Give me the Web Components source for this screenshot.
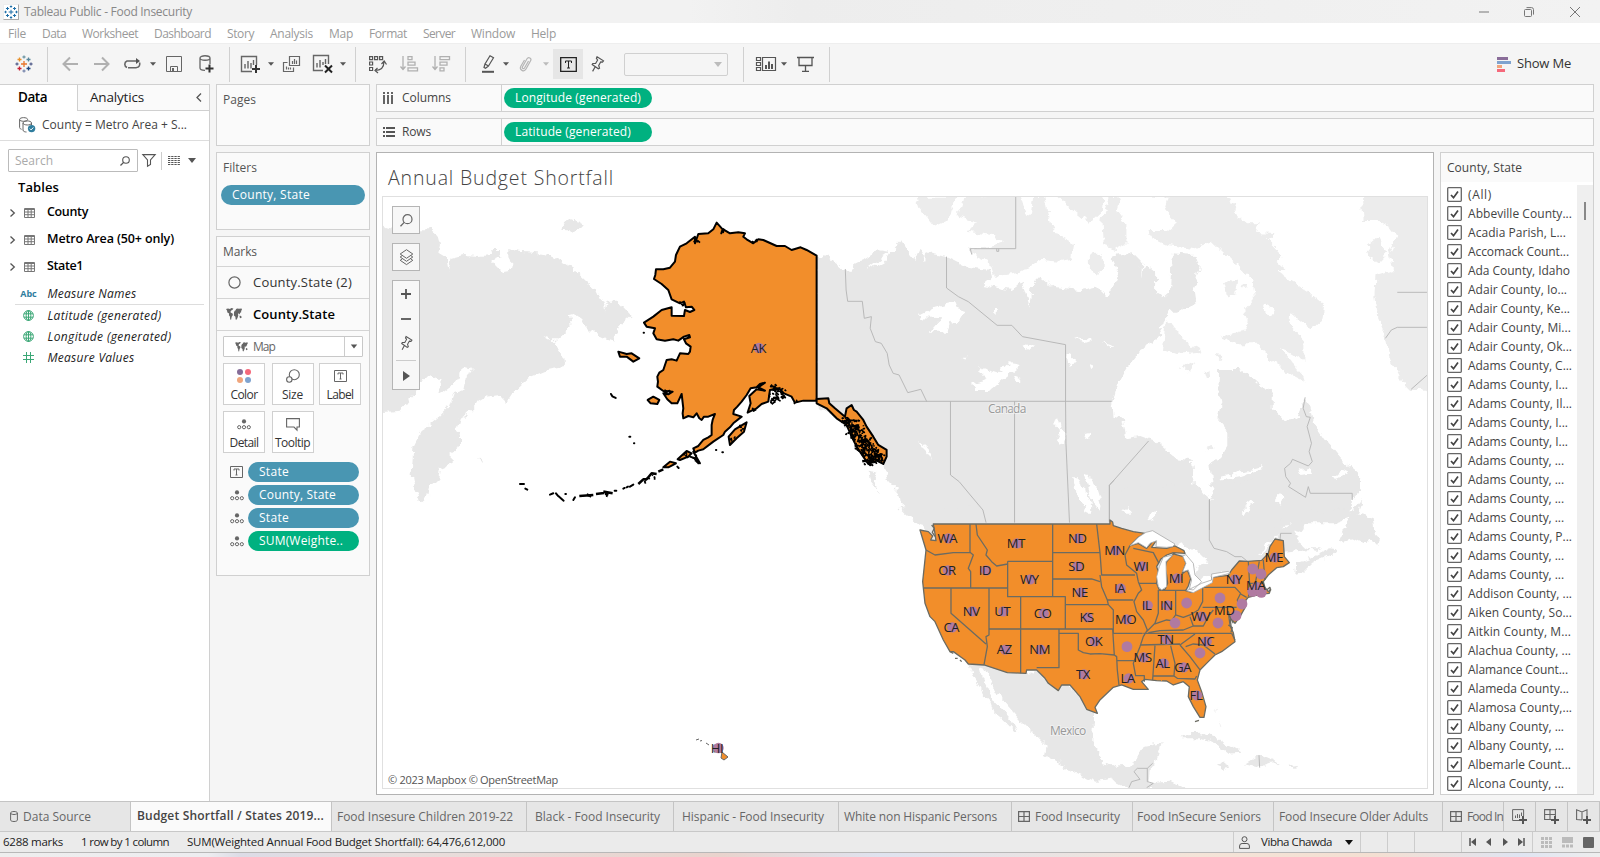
<!DOCTYPE html>
<html lang="en">
<head>
<meta charset="utf-8">
<title>Tableau Public - Food Insecurity</title>
<style>
html,body{margin:0;height:100%;overflow:hidden;background:#f5f5f5;font-family:"Open Sans","Noto Sans",sans-serif;font-size:12px;color:#333}
</style>
</head>
<body>
<tab-app></tab-app>
<script>
const define = (name, css, html) => customElements.define(name, class extends HTMLElement {
  constructor() { super(); this.attachShadow({ mode: 'open' }); }
  connectedCallback() {
    if (this.ready) return;
    this.ready = true;
    const t = document.createElement('template');
    t.innerHTML = `<style>*{box-sizing:border-box}:host{box-sizing:border-box;flex-shrink:0}${css}</style>${typeof html === 'function' ? html(this) : html}`;
    this.shadowRoot.append(t.content.cloneNode(true));
  }
});

/* Text that tracks its letters so that the run takes exactly `w` pixels. */
customElements.define('fit-text', class extends HTMLElement {
  constructor() { super(); this.attachShadow({ mode: 'open' }).innerHTML = '<style>:host{display:inline-block;white-space:pre;line-height:1.3;flex-shrink:0}</style><slot></slot>'; }
  connectedCallback() {
    const w = +this.getAttribute('w');
    if (!w || this.done) return;
    this.done = true;
    const natural = this.getBoundingClientRect().width;
    this.style.letterSpacing = ((w - natural) / this.textContent.length).toFixed(3) + 'px';
    this.style.width = w + 'px';
  }
});
const T = (w, s, style = '') => `<fit-text w="${w}" style="${style}">${s}</fit-text>`;

const plus = (x, y, c = '#333') => `<path d="M${x - 4} ${y}h8M${x} ${y - 4}v8" stroke="${c}" stroke-width="2"/>`;
const cross = (x, y, r, c) => `<path d="M${x - r} ${y}h${2 * r}M${x} ${y - r}v${2 * r}" stroke="${c}" stroke-width="1.3"/>`;
const logo = (c) => cross(9, 9, 3, c[0]) + cross(4.5, 4.5, 2, c[1]) + cross(13.5, 4.5, 2, c[2]) + cross(4.5, 13.5, 2, c[3]) + cross(13.5, 13.5, 2, c[4]) + cross(9, 2, 1.5, c[5]) + cross(2, 9, 1.5, c[6]) + cross(16, 9, 1.5, c[7]) + cross(9, 16, 1.5, c[8]);
const dots3 = '<circle cx="7" cy="2.4" r="2.1" fill="#666"/><g stroke="#666"><circle cx="2.2" cy="8.2" r="1.6"/><circle cx="7" cy="8.2" r="1.6"/><circle cx="11.8" cy="8.2" r="1.6"/></g>';
const world = '<path fill="#666" d="M0 1l2-.6L4 1l1.200-1 2.200.4-1 1.600-1.200.6-.8 1.400.6.800 1.600.8.3 1.400-1.200 1.800-.6 3-.9-.2-.3-3-1-1.400.2-1.600L1.400 4.400 1 2.400zM8 4.200l.7-1.400 1-.6L10 1l1.600-.6L13 .800l2.600-.4.4 1.600-.9.8.1 1.400-1 .6-.5 1.800-.9-1.400-.8.8.3 1.600-.8 2.400-1 1.800-.9-.4-.2-2.600-1.500-1.200zM13.800 7.600l1.600.6.2 1.600-1.400.5-.7-1.300z"/>';
const T_ = (x, y) => `<path d="M${x - 3} ${y - 1.5}v-2h6v2M${x} ${y - 3.5}v7M${x - 1.5} ${y + 3.5}h3" stroke="currentColor"/>`;
const pin = '<path d="M6 .8l6.500 4-1 1.400-1.800-.3-2 3.600.8 2.600-1.200.7L1.200 8.600l.6-1.100 2.800 0 2-3.500-1.200-1.700zM4.200 10.800l-2.600 4.600" stroke="#555" stroke-width="1.200"/>';
const I = {
  app: [14, 14, `<g transform="scale(.78)">${logo(Array(9).fill('#1f6fa8'))}</g>`],
  logo: [18, 18, logo(['#e8762c', '#e8912c', '#59879b', '#c72035', '#1f457e', '#7199a6', '#5b6591', '#5b6591', '#7d8bb0'])],
  back: [16, 14, '<path d="M8 .5L1.500 7 8 13.500M1.500 7H16" stroke="#b0b0b0" stroke-width="2"/>'],
  fwd: [16, 14, '<path d="M8 .5l6.500 6.500L8 13.500M14.500 7H0" stroke="#b0b0b0" stroke-width="2"/>'],
  redo: [18, 12, '<path d="M4 9.500a3.500 3.500 0 010-6.500h10M13.500 9.500a3.500 3.500 0 003-5M5 9.700h8.500" stroke="#666" stroke-width="1.600"/><path d="M13 0l4 3-4 3z" fill="#555"/>'],
  caret: [6, 4, '<path d="M0 .2h6L3 3.800z" fill="#555"/>'],
  caretL: [6, 4, '<path d="M0 .2h6L3 3.800z" fill="#bbb"/>'],
  caretB: [8, 5, '<path d="M0 0h8L4 5z" fill="#555"/>'],
  caretK: [8, 5, '<path d="M0 0h8L4 5z" fill="#111"/>'],
  save: [16, 16, '<path d="M.5.500h15v15H.5zM4.500 15.500v-5h7v5" stroke="#666"/><path d="M6 12h2v3H6z" fill="#666"/>'],
  db: [15, 18, '<path d="M1 3c0-3 10-3 10 0s-10 3-10 0v10c0 2 3 2.300 5 2.300M11 3v6" stroke="#666" stroke-width="1.300"/>' + plus(10.5, 13.5)],
  sheet: [19, 17, '<path d="M11 15.500H.5V.5h15V9M4 12.500V8M7 12.500V5M10 12.500V7M12.500 9V4" stroke="#666" stroke-width="1.400"/>' + plus(15, 13)],
  dup: [17, 16, '<path d="M6.500.5h10v9h-10zM4.500 6.500h-4v9h10v-4M9.500 8V5M11.500 8V3M13.500 8V4.500M3.500 13.500v-3M5.500 13.500v-2M7.500 13.500v-2" stroke="#666" stroke-width="1.200"/>'],
  clear: [19, 18, '<path d="M10 15.500H.5V.5h15V9M4 12.500V8M7 12.500V5M10 10V7M12.500 9V4" stroke="#666" stroke-width="1.400"/><path d="M12 10.500l7 7M19 10.500l-7 7" stroke="#222" stroke-width="2"/>'],
  swap: [18, 17, '<path d="M.6.600h3v3h-3zM5.600.6h3v3h-3zM10.600.6h3v3h-3zM.6 6h3v3h-3zM.6 11.500h3v3h-3zM6 14.500c6 0 9-3 9-9M8.500 12L6 14.500 9 17M12.500 8L15.200 5 17.500 8.500" stroke="#555" stroke-width="1.200"/>'],
  asc: [18, 16, '<path d="M3 0v13M.5 10.500L3 13.500l2.500-3M8 .6h4v3H8zM8 6.200h7v3H8zM8 11.800h9.500v3H8z" stroke="#b0b0b0" stroke-width="1.300"/>'],
  desc: [18, 16, '<path d="M3 0v13M.5 10.500L3 13.500l2.500-3M8 .6h9.500v3H8zM8 6.200h7v3H8zM8 11.800h4v3H8z" stroke="#b0b0b0" stroke-width="1.300"/>'],
  pen: [13, 18, '<path d="M8 .7l3.500 2L6.500 11 3 9zM3 9l-1 3.500 1.500.8 3-2.300" stroke="#555" stroke-width="1.200"/><path d="M0 16.800h12" stroke="#555" stroke-width="2"/>'],
  clip: [13, 16, '<path d="M9.500 5l-4 7c-1 1.500-2.800.3-2-1.200l4.500-8c1.500-2.500 5-.5 3.600 2L7 13c-2 3.500-7 1-5.200-2.700L5.500 4" stroke="#b5b5b5" stroke-width="1.200"/>'],
  tbox: [17, 15, `<g style="color:#222"><path d="M.7.700h15.600v13.600H.7z" stroke="#222" stroke-width="1.300"/>${T_(8.5, 7.5)}</g>`],
  tsm: [13, 12, '<path d="M.5.500h12v11h-12z" stroke="#666"/><path d="M4 4.500v-1.500h5v1.500M6.500 3v6M5.500 9h2" stroke="#666"/>'],
  pin: [13, 16, pin],
  cards: [20, 15, '<path d="M.5.500h4v3h-4zM.5 5.500h4v3h-4zM.5 10.500h4v3h-4zM6.500.5h13v13h-13z" stroke="#555" stroke-width="1.200"/><path d="M10 12V8M13 12V4.500M16 12V7" stroke="#555" stroke-width="2"/>'],
  present: [17, 16, '<path d="M0 1.500h17M2 2v7.500h13V2M8.500 10v5M5 15.400h7" stroke="#555" stroke-width="1.300"/>'],
  showme: [14, 15, '<path d="M0 0h11v3H0z" fill="#8a6d99"/><path d="M0 4h14v3H0z" fill="#7fa3cf"/><path d="M0 8h5v3H0z" fill="#f0a57c"/><path d="M0 12h8v3H0z" fill="#f5697b"/>'],
  chevL: [5, 9, '<path d="M5 .5L1 4.500l4 4" stroke="#555" stroke-width="1.300"/>'],
  chevR: [5, 8, '<path d="M.5.500L4.300 4 .5 7.500" stroke="#555" stroke-width="1.300"/>'],
  ds: [17, 16, '<path d="M.6 2.500c0-2.500 8-2.500 8 0s-8 2.300-8 0v8c0 1 1 1.500 2 1.800M4 6c0-2.800 8.500-2.800 8.500 0s-8.500 2.500-8.500 0v7c0 1.500 2 2 3.500 2M12.500 6v2" stroke="#666"/><circle cx="12.600" cy="11.600" r="3.700" fill="#2f7d9e"/><path d="M10.800 11.600l1.300 1.300 2.200-2.400" stroke="#fff"/>'],
  mag: [10, 10, '<circle cx="6" cy="4" r="3.300" stroke="#555" stroke-width="1.100"/><path d="M3.600 6.400L.5 9.500" stroke="#555" stroke-width="1.300"/>'],
  magB: [13, 13, '<circle cx="7.500" cy="5.200" r="4.500" stroke="#666" stroke-width="1.200"/><path d="M4.200 8.400L.5 12.300" stroke="#666" stroke-width="1.300"/>'],
  funnel: [14, 13, '<path d="M.8.600h12.400L8.500 6v4.500l-3 1.800V6z" stroke="#555" stroke-width="1.100"/>'],
  list: [12, 10, '<path d="M0 .5h12M0 2.500h12M0 4.500h12M0 6.500h12M0 8.500h12" stroke="#555" stroke-dasharray="2.300 .9"/>'],
  table: [11, 10, '<path d="M.5.500h10v9h-10zM.5 1.500h10M.5 4h10M.5 6.700h10M4 2v7.500M7.200 2v7.500" stroke="#777"/>'],
  globe: [11, 11, '<g stroke="#3ba776"><circle cx="5.500" cy="5.500" r="4.900"/><ellipse cx="5.500" cy="5.500" rx="2.300" ry="4.900"/><path d="M1 3.800h9M1 7.200h9M5.500.5v10"/></g>'],
  hash: [11, 11, '<path d="M0 3.500h11M0 7.500h11M3.500 0v11M7.500 0v11" stroke="#3ba776"/>'],
  circle: [13, 13, '<circle cx="6.500" cy="6.500" r="5.600" stroke="#666" stroke-width="1.200"/>'],
  world: [16, 12, world],
  worldS: [13, 10, `<g transform="scale(.8)">${world}</g>`],
  color: [14, 14, '<circle cx="3" cy="3" r="3" fill="#856c98"/><circle cx="11" cy="3" r="3" fill="#f5697b"/><circle cx="3" cy="11" r="3" fill="#f0a57c"/><circle cx="11" cy="11" r="3" fill="#7fa3cf"/>'],
  size: [14, 14, '<circle cx="8.300" cy="5.700" r="5" stroke="#666" stroke-width="1.100"/><circle cx="3.300" cy="10.500" r="2.700" fill="#fafafa" stroke="#666" stroke-width="1.100"/>'],
  detail: [14, 10, dots3],
  tooltip: [14, 13, '<path d="M.6.600h12.800v8.400h-2.400v3.200L8 9H.6z" stroke="#666" stroke-width="1.100"/>'],
  cols: [10, 12, '<path d="M1 0v2M1 3v9M5 0v2M5 3v9M9 0v2M9 3v9" stroke="#555" stroke-width="1.800"/>'],
  rows: [12, 10, '<path d="M0 1h2M3 1h9M0 5h2M3 5h9M0 9h2M3 9h9" stroke="#555" stroke-width="1.800"/>'],
  layers: [15, 17, '<path d="M7.500.7l6.300 4.300-6.300 4.300L1.200 5zM1.200 8l6.300 4.300L13.800 8M1.200 11.300l6.300 4.300 6.300-4.300M1.200 8l2-1.400M13.800 8l-2-1.400M1.200 11.300l2-1.400M13.800 11.300l-2-1.400" stroke="#666"/>'],
  add: [10, 10, '<path d="M0 5h10M5 0v10" stroke="#555" stroke-width="1.800"/>'],
  sub: [10, 10, '<path d="M0 5h10" stroke="#555" stroke-width="1.800"/>'],
  play: [7, 10, '<path d="M0 0l7 5-7 5z" fill="#555"/>'],
  min: [10, 10, '<path d="M0 5h10" stroke="#777"/>'],
  max: [10, 10, '<path d="M.5 3.500q0-1 1-1h5q1 0 1 1v5q0 1-1 1h-5q-1 0-1-1zM2.500.6h5q2 0 2 2v5" stroke="#777"/>'],
  close: [10, 10, '<path d="M0 0l10 10M10 0L0 10" stroke="#777"/>'],
  cyl: [8, 11, '<path d="M.6 2c0-2 6.800-2 6.800 0v7c0 2-6.800 2-6.800 0zc0 2 6.800 2 6.800 0" stroke="#666"/>'],
  grid: [12, 11, '<path d="M.6.600h10.800v9.800H.6zM6 .6v9.800M.6 5.500h10.800" stroke="#666" stroke-width="1.200"/>'],
  nsheet: [15, 15, '<path d="M8 11.500H.6V.6h11V7M3.500 9V6.500M5.500 9V5M7.500 9V5.500M9.500 7V3.500" stroke="#666"/>' + plus(11, 11, '#555')],
  ngrid: [15, 15, '<path d="M7 10.500H.6V.6h10.800V7M6 .6v9.900M.6 5.500h10.800" stroke="#666" stroke-width="1.100"/>' + plus(11, 11, '#555')],
  nstory: [15, 15, '<path d="M6 11L.6 10.500V.8L6 3l5-2.200V7M6 3v8" stroke="#666" stroke-width="1.100"/>' + plus(11, 11, '#555')],
  person: [11, 13, '<circle cx="5.500" cy="3.200" r="2.500" stroke="#555"/><path d="M.6 12.400V10q0-2.500 2.500-2.500h4.800q2.500 0 2.500 2.500v2.400z" stroke="#555"/>'],
  first: [7, 8, '<path d="M1 0v8" stroke="#555" stroke-width="1.500"/><path d="M7 0v8L2 4z" fill="#555"/>'],
  prev: [5, 8, '<path d="M5 0v8L0 4z" fill="#555"/>'],
  next: [5, 8, '<path d="M0 0v8l5-4z" fill="#555"/>'],
  last: [7, 8, '<path d="M6 0v8" stroke="#555" stroke-width="1.500"/><path d="M0 0v8l5-4z" fill="#555"/>'],
  v1: [11, 11, '<path d="M0 1.500h11M0 5.500h11M0 9.500h11" stroke="#bbb" stroke-width="3" stroke-dasharray="3 1"/>'],
  v2: [11, 11, '<path d="M0 0h11v6H0z" fill="#bbb"/><path d="M0 9h11" stroke="#bbb" stroke-width="3" stroke-dasharray="3 1"/>'],
  v3: [11, 11, '<rect width="11" height="11" rx="1" fill="#666"/>'],
  check: [15, 15, '<rect x=".7" y=".7" width="13.600" height="13.600" rx=".8" fill="#fff" stroke="#666" stroke-width="1.300"/><path d="M4 8l2.500 2.700L11 4.500" stroke="#444" stroke-width="1.700"/>']
};
define('ui-icon', ':host{display:block}svg{display:block;overflow:visible}', (el) => {
  const [w, h, body] = I[el.getAttribute('name')];
  return `<svg width="${w}" height="${h}" viewBox="0 0 ${w} ${h}" fill="none">${body}</svg>`;
});
const icon = (n, ml = 0, style = '') => `<ui-icon name="${n}" style="margin-left:${ml}px;${style}"></ui-icon>`;

define('title-bar', ':host{display:flex;height:23px;background:linear-gradient(90deg,#f2f2f2 43%,#ededed 50%,#f2f2f2);align-items:center;color:#888;padding-left:3px}.a{border:1px solid #ddd;border-color:#eee #aaa #aaa #eee;background:#fff}.s{flex:1}',
  `<div class="a">${icon('app')}</div><span style="width:5px"></span>${T(168, 'Tableau Public - Food Insecurity')}<span class="s"></span>${icon('min')}${icon('max', 35)}${icon('close', 36)}<span style="width:20px"></span>`);

define('menu-bar', ':host{display:flex;height:20px;background:#fff;align-items:center;color:#9a9a9a;padding:2px 0 0 8px}fit-text{margin-right:16px}',
  () => [['File', 18], ['Data', 24], ['Worksheet', 56], ['Dashboard', 57], ['Story', 27], ['Analysis', 43], ['Map', 24], ['Format', 38], ['Server', 32], ['Window', 44], ['Help', 25]].map(([s, w]) => T(w, s)).join(''));

/* Each entry gives a tool and the centre line it is spaced to; '|' is a divider. */
const tools = [['logo', 23.5], ['|', 47.5], ['back', 70], ['fwd', 102], ['redo', 132], ['caret', 152.5], ['save', 174], ['db', 206.5], ['|', 229.5], ['sheet', 250.5], ['caret', 270.5], ['dup', 291.5], ['clear', 322.5], ['caret', 342.5], ['|', 355.5], ['swap', 378], ['asc', 409], ['desc', 441], ['|', 465.5], ['pen', 488.5], ['caret', 505.5], ['clip', 525.5], ['caretL', 545.5], ['on', 568], ['pin', 597.5], ['combo', 676], ['|', 743.5], ['cards', 766], ['caret', 783.5], ['present', 805.5], ['|', 829.5]];
const toolRow = () => {
  let end = 0;
  return tools.map(([n, c]) => {
    const w = { '|': 1, on: 30, combo: 104 }[n] || I[n][0];
    const ml = c - w / 2 - end;
    end = c + w / 2;
    if (n === '|') return `<i style="margin-left:${ml}px"></i>`;
    if (n === 'on') return `<span class="on" style="margin-left:${ml}px">${icon('tbox')}</span>`;
    if (n === 'combo') return `<span class="combo" style="margin-left:${ml}px">${icon('caretB', 0, 'opacity:.35')}</span>`;
    return icon(n, ml);
  }).join('');
};
define('tool-bar', `:host{display:flex;height:41px;background:#f5f5f5;border-top:1px solid #eee;align-items:center}
span{display:flex;justify-content:center;flex-shrink:0}i{width:1px;height:35px;background:#d0d0d0;margin-top:1px;flex-shrink:0}
.on{background:#e6e6e6;width:30px;height:30px;align-items:center}.combo{width:104px;height:23px;border:1px solid #d0d0d0;border-radius:2px;align-items:center;justify-content:flex-end;padding-right:5px}.s{flex:1}`,
  () => toolRow() + `<span class="s"></span>${icon('showme')}<span style="width:6px"></span>${T(54, 'Show Me', 'font-size:13px;margin-top:-2px')}<span style="width:29px"></span>`);

define('data-field', ':host{display:flex;align-items:center;height:21px;color:#222;font-size:12px}.i{width:18px;display:flex;justify-content:center;margin:0 10px 0 0}b{color:#2f7d9e;font-size:9px;font-weight:700;font-style:normal}',
  (el) => `<span class="i">${el.getAttribute('icon') === 'abc' ? '<b>Abc</b>' : icon(el.getAttribute('icon'))}</span><slot></slot>`);
const field = (ic, w, s) => `<data-field icon="${ic}" style="font-style:italic;padding-left:19.500px">${T(w, s)}</data-field>`;
const trow = (w, s) => `<div class="tr">${icon('chevR')}${icon('table', 9)}${T(w, s, 'margin-left:12px')}</div>`;
define('data-pane', `:host{display:block;width:210px;background:#fff;border-right:1px solid #d0d0d0;border-top:1px solid #d0d0d0}
.tabs{display:flex;height:26px;font-size:13.500px;color:#222}.tabs b{width:77px;padding:3px 0 0 18px}.tabs div{flex:1;display:flex;align-items:center;background:#fafafa;border-left:1px solid #d0d0d0;border-bottom:1px solid #d0d0d0;padding:0 8px 0 12px;justify-content:space-between}
.ds{height:30px;display:flex;align-items:center;padding-left:19px;border-bottom:1px solid #ddd;color:#444;padding-bottom:1px}
.se{display:flex;align-items:center;padding:8px 0 0 8px;height:31px}.in{width:130px;height:23px;border:1px solid #bbb;border-radius:1px;display:flex;align-items:center;justify-content:space-between;padding:0 7px 0 6px;color:#aaa}
.tb{display:block;padding:7px 0 0 18px;height:27px}.tr{display:flex;align-items:center;height:27px;padding-left:10px}.bold{font-weight:600;color:#000;font-size:12.500px}
hr{border:0;border-top:1px solid #ddd;margin:0 5px 0 15px}`,
  `<div class="tabs"><b style="font-weight:600;color:#000">${T(29, 'Data')}</b><div>${T(54, 'Analytics')}${icon('chevL')}</div></div>
<div class="ds">${icon('ds')}${T(145, 'County = Metro Area + S...', 'margin-left:6px')}</div>
<div class="se"><div class="in">${T(38, 'Search')}${icon('mag')}</div>${icon('funnel', 4)}<span style="width:1px;height:18px;background:#ccc;margin-left:5px"></span>${icon('list', 6)}${icon('caretB', 8)}</div>
<div class="bold"><div class="tb">${T(41, 'Tables', 'font-size:13px')}</div>${trow(41, 'County')}${trow(127, 'Metro Area (50+ only)')}${trow(36, 'State1')}</div>
<div style="height:3px"></div>${field('abc', 89, 'Measure Names')}<hr>${field('globe', 114, 'Latitude (generated)')}${field('globe', 124, 'Longitude (generated)')}${field('hash', 87, 'Measure Values')}`);

define('shelf-pill', ':host{display:flex;align-items:center;height:20px;border-radius:10px;padding-left:11px;color:#fff;background:#4996b2;font-size:12px}:host([green]){background:#00b180}', '<slot></slot>');
define('side-card', ':host{display:block;background:#fafafa;border:1px solid #d0d0d0;color:#555}.t{height:29px;padding:6px 0 0 6px;font-size:12px}',
  (el) => `<div class="t">${T(el.getAttribute('tw'), el.getAttribute('label'))}</div><slot></slot>`);
define('mark-button', ':host{display:flex;flex-direction:column;align-items:center;justify-content:space-between;height:42px;width:42px;background:#fff;border:1px solid #d0d0d0;padding:0 0 1px}.i{height:24px;display:flex;align-items:center;margin-top:1px}',
  (el) => `<div class="i">${icon(el.getAttribute('icon'))}</div><slot></slot>`);
const mp = (ic, w, s, g = '') => `<div class="mp"><span>${icon(ic)}</span><shelf-pill ${g}>${T(w, s)}</shelf-pill></div>`;
define('shelf-column', `:host{display:flex;flex-direction:column;gap:6px;width:154px}
.l{display:flex;align-items:center;height:32px;border-top:1px solid #d4d4d4;font-size:13px;color:#333;padding-bottom:1px}.l span{width:36px;padding-left:11px}
.sel{display:flex;align-items:center;margin:5px 6px 6px;height:21px;background:#fff;border:1px solid #c8c8c8;border-radius:1px;color:#666}.sel .d{border-left:1px solid #ccc;height:100%;width:18px;display:flex;align-items:center;justify-content:center;margin-left:auto}
.g{display:grid;grid-template-columns:42.500px 41.500px 43px;gap:6px;margin-left:6px;color:#333}
.mp{display:flex;margin-bottom:3px;align-items:center;padding-left:6px}.mp span{width:25px;padding-left:7px}.mp shelf-pill{width:111px}`,
  `<side-card label="Pages" tw="33" style="height:62px"></side-card>
<side-card label="Filters" tw="34" style="height:78px"><shelf-pill style="margin:3px 4px 0">${T(78, 'County, State')}</shelf-pill></side-card>
<side-card label="Marks" tw="34" style="height:340px"><div class="l"><span>${icon('circle')}</span>${T(99, 'County.State (2)')}</div><div class="l" style="font-weight:600;color:#000"><span style="padding-left:9px">${icon('world')}</span>${T(82, 'County.State')}</div><div style="border-top:1px solid #d4d4d4"></div>
<div class="sel">${icon('worldS', 11)}${T(22, 'Map', 'margin-left:5px')}<div class="d">${icon('caretB', 0, 'transform:scale(.8)')}</div></div>
<div class="g"><mark-button icon="color">${T(27, 'Color')}</mark-button><mark-button icon="size">${T(21, 'Size')}</mark-button><mark-button icon="tsm">${T(27, 'Label')}</mark-button><mark-button icon="detail">${T(29, 'Detail')}</mark-button><mark-button icon="tooltip">${T(35, 'Tooltip')}</mark-button></div>
<div style="height:9px"></div>${mp('tsm', 30, 'State')}${mp('detail', 77, 'County, State')}${mp('detail', 30, 'State')}${mp('detail', 84, 'SUM(Weighte..', 'green')}</side-card>`);

define('axis-shelf', ':host{display:flex;height:28px;align-items:center;border:1px solid #d0d0d0;background:#fafafa;color:#444}.h{width:125px;height:100%;border-right:1px solid #d0d0d0;display:flex;align-items:center}.h span{width:25px;padding-left:6px}::slotted(shelf-pill){width:148px;margin-left:2px;flex-shrink:0}',
  (el) => `<div class="h"><span>${icon(el.getAttribute('icon'))}</span>${T(el.getAttribute('lw'), el.getAttribute('label'))}</div><slot></slot>`);

/* ---------- map ---------- */
const labels = [['WA',142,115],['OR',141,211],['ID',255,211],['MT',348,130],['WY',388,238],['NV',214,334],['UT',307,334],['CA',154,382],['CO',428,340],['AZ',313,449],['NM',419,449],['ND',532,115],['SD',529,199],['NE',539,277],['KS',560,352],['OK',581,424],['TX',549,523],['MN',644,151],['IA',659,265],['MO',677,358],['WI',723,199],['IL',740,316],['IN',799,316],['MI',828,235],['TN',797,418],['MS',728,472],['AL',788,490],['GA',848,502],['LA',683,535],['FL',888,586],['NC',917,424],['WV',902,350],['MD',973,331],['NY',1002,238],['MA',1067,256],['ME',1122,172]];
const noDot = ['MD','MA'];
const plain = [[860,309],[825,369],[960,294],[954,369],[681,440],[900,459],[1058,207],[1083,222],[1026,312],[1008,347],[1058,274],[1084,277],[1070,262]];
let seed = 7;
const rnd = () => (seed = (seed * 16807) % 2147483647) / 2147483647;
const scatter = (pts, spread, n) => { let d = ''; pts.forEach(([x, y]) => { for (let i = 0; i < n; i++) d += `M${(x + (rnd() - .5) * spread).toFixed(0)} ${(y + (rnd() - .5) * spread).toFixed(0)}l${(rnd() * 9 - 3).toFixed(0)} ${(rnd() * 8 - 4).toFixed(0)}l${(rnd() * 8 - 3).toFixed(0)} ${(rnd() * 10 - 3).toFixed(0)}`; }); return d; };
const Z4 = 'translate(380 190) scale(.3333)', Z5 = 'translate(900 500) scale(.3333)', Z10 = 'translate(820 190) scale(.3954 .3333)', Z11 = 'translate(1080 480) scale(.3333)', Z12 = 'translate(930 640) scale(.3333)';

define('geo-map', ':host{display:block;position:relative;border:1px solid #e0e0e0;overflow:hidden}svg{display:block;position:absolute;inset:0}path{vector-effect:non-scaling-stroke}.st path{stroke-linejoin:round}',
  () => `<svg width="1044" height="591" viewBox="383 197 1044 591" fill="none">
<defs><filter id="coast" x="0" y="0" width="100%" height="100%"><feTurbulence type="fractalNoise" baseFrequency=".12" numOctaves="3" seed="4" result="n"/><feDisplacementMap in="SourceGraphic" in2="n" scale="9" xChannelSelector="R" yChannelSelector="G"/></filter>
<filter id="edge" x="-2%" y="-2%" width="104%" height="104%"><feTurbulence type="fractalNoise" baseFrequency=".25" numOctaves="2" seed="2" result="n"/><feDisplacementMap in="SourceGraphic" in2="n" scale="4" xChannelSelector="R" yChannelSelector="G"/></filter></defs>
<g filter="url(#coast)"><rect x="383" y="197" width="1044" height="591" fill="#fff"/>
<g fill="#e7e7e7">
<g transform="${Z4}"><path d="M-5 97L20 115 40 120 120 118 150 118 172 135 180 165 175 185 200 200 205 245 212 205 250 195 300 198 325 195 335 180 355 180 362 200 330 212 345 230 370 243 388 240 392 225 385 200 385 175 420 182 490 188 530 205 580 235 650 300 670 345 672 368 680 335 715 335 755 378 735 395 715 410 712 430 700 455 670 445 640 430 610 400 590 370 570 375 575 410 555 430 525 455 510 440 490 435 515 450 530 470 550 500 552 530 500 540 450 560 400 605 380 635 360 615 320 620 295 635 290 645 270 665 240 685 230 720 240 735 240 770 215 785 215 820 180 835 175 870 150 890 145 915 118 938 105 900 95 850 100 770 125 720 150 705 180 680 205 655 220 610 250 600 258 560 275 535 245 530 240 555 215 590 190 610 170 600 185 570 160 560 120 570 110 600 80 640 60 665-5 670ZM540 120L545 105 575 88 600 92 608 108 580 122 555 120ZM250 682l15-10 3 3-12 8zM295 808l4-2 8 14z"/></g>
<g transform="${Z10}">
<path fill="#e7e7e7" d="M-10 197L20 200 55 235 80 240 85 215 110 210 150 180 175 185 115 240 160 215 205 150 220 180 240 210 250 180 265 210 270 190 320 200 370 230 430 240 435 260 410 285 480 300 510 275 530 350 535 290 560 260 590 290 660 300 700 290 725 320 740 290 755 250 740 210 750 190 790 190 815 220 812 265 820 220 850 250 850 310 870 325 885 310 890 190 950 195 960 230 945 300 950 340 900 365 885 365 860 415 820 390 865 418 840 460 810 480 800 500 770 545 750 590 738 650 740 680 765 685 775 745 810 738 850 755 900 805 940 810 945 850 940 885 970 915 985 935 1000 915 990 880 985 825 1010 810 1030 770 1030 720 1005 685 1015 640 1010 600 1012 540 1060 540 1090 560 1120 590 1145 610 1145 660 1170 690 1210 685 1222 625 1240 650 1250 700 1275 745 1320 810 1360 850 1368 900 1345 935 1345 980 1300 1000 1180 1000 1140 1060 285 1060 250 990 205 945 200 910 170 870 160 825 120 800 60 700-10 645Z"/>
<path fill="#ececec" d="M245 20L320 20 345 20 330 60 325 90 290 110 250 50ZM365 20L350 80 395 95 370 125 440 135 465 155 440 165 380 178 385 195 430 220 440 260 500 250 560 210 610 215 635 210 640 160 605 140 585 110 570 20 540 15 532 80 520 75 505 15ZM600 15L720 15 715 60 680 98 650 70ZM735 15L760 20 750 60 775 100 775 165 750 180 715 165 712 90ZM680 200L700 190 720 210 720 240 700 255 680 240ZM820 15L880 20 870 60 900 100 880 120 830 120 835 140 880 165 950 175 990 155 1020 190 1060 230 1095 270 1100 330 1070 370 1080 400 1060 430 1010 440 1050 460 1100 460 1140 510 1200 560 1225 575 1220 555 1160 470 1180 480 1225 510 1225 450 1180 390 1190 370 1240 420 1270 390 1275 345 1230 300 1190 270 1155 240 1180 240 1160 220 1170 200 1130 150 1150 130 1100 125 1110 100 1080 100 1050 70 1055 40 1020 15ZM1022 280l15-14 18 10-5 35-20 5zM1065 285l20-3-5 12zM870 410L882 385 895 420 930 450 948 490 900 495 865 480ZM930 475l20-5 20 15-10 8-30-10zM915 530l20-15 12 10-20 22zM973 545l12 0 2 20-8 5zM1000 495l22 3-8 12zM975 770l15-5 8 8-15 8z"/>
<path fill="#ececec" d="M1370 15L1560 15 1560 610 1520 600 1495 600 1470 570 1440 500 1430 440 1410 390 1402 320 1405 255 1450 240 1440 190 1460 140 1440 110 1410 90 1375 90ZM1385 165l25-25 12 30 15 20-20 25-25-10z"/>
<path d="M120 845L145 850 135 870 152 908 125 870ZM200 950L225 955 270 990 280 1015 250 1005Z"/></g>
<g transform="${Z11}"><path d="M-480 100L200 20 600 0 843 0 843 30 800 80 750 98 680 92 620 100 600 120 560 185 540 230 590 175 600 150 640 125 680 128 665 150 640 160 660 190 690 210 600 220 560 250 500 290 430 350 350 440 300 560 0 620-400 420ZM645 282L650 250 690 235 750 205 770 208 750 225 700 245 670 275ZM680 205l50 0-20 8zM775 185L790 150 820 90 845 60 830 100 875 110 880 150 900 170 895 195 870 180 860 195 820 175ZM495 850L530 828 545 825 600 848 570 852 540 862ZM410 855l20-5 20 8-20 6ZM628 854l22-2 4 6-20 3z"/><path fill="#f1f1f1" d="M407 685l8 8-2 3zM415 715l5 25 4 0z"/></g>
<g transform="${Z12}"><path d="M110 62L160 72 270 90 390 120 490 200 487 300 520 370 560 380 610 375 640 320 695 310 690 330 675 375 660 385 655 430 720 425 770 450 600 450 540 420 500 425 440 400 345 345 350 320 320 290 270 240 205 165 165 90 150 85 155 110 180 160 200 190 245 240 262 272 255 275 215 235 190 215 180 185 165 170 150 140 130 110ZM748 295L770 280 810 278 850 290 900 315 937 335 890 338 860 315 810 295 770 295Z"/></g>
</g>
<g fill="#fff" transform="${Z10}"><path d="M250 375L290 350 340 335 345 350 370 360 350 400 330 395 320 425 280 425 310 385 255 382ZM390 600L385 580 420 570 400 530 450 550 480 520 508 525 470 560 430 600ZM640 865L655 865 660 890 680 910 687 965 675 965 650 920ZM670 855L690 860 712 945 708 965 690 940ZM625 500l12-10 5 20-12 18zM680 515l15 12-8 15zM590 700l15-12 5 25 12 20-10 35-15-20 10-25zM665 750l5-20 15-5-5 20zM435 360l12 0 0 15zM355 500l15 0-2 12zM645 445l45 5-20 8zM715 460l30 10-10 5zM1015 860l45-12 50-15 10-10-5 15-50 20-45 10zM1210 840l25-10 10 20-30 5zM1295 860l35-20 10 5-30 18zM830 980l15-18 0 25zM1075 940l18-10-12 28zM1115 335l35 25-5 15-15-5zM945 875l20 5-5 8zM250 750l25 25 5 35zM490 560l20 10-8 10zM515 465l30 5-25 10zM880 365l40 30-35 8z"/></g>
<g fill="#fff" transform="${Z11}"><path d="M335-10L380 0 400 25 395 60 370 40ZM490 95l25-35 5 8-22 35zM585 60l10-15 12 5-3 20-15 3zM130 95l15-15 5 15zM205 105l12-12 5 25-12 3zM270 200L300 190 370 225 385 245 350 260 340 290 325 270 320 220ZM325 325L400 285 440 278 450 290 400 300 360 335Z"/></g></g>
<g stroke="#b3b3b3" stroke-width=".9"><g transform="${Z10}"><path d="M64 237L66 300 70 334 107 334 112 385 130 380 127 415 140 455 155 460 170 490 175 525 185 550 200 555 222 608 255 598 270 635M320 200V294L350 320 375 335 448 406 485 406 512 440 621 464V630L622 760 631 998M-6 634H738M495 20V176H380L384 194M447 176v8h5v-8M330 634V855L352 875 380 915 412 960 420 998M492 634V998M831 753L732 886V998M1227 622L1222 655 1230 680 1240 682 1232 710 1243 760 1237 785 1245 815 1235 828 1195 808 1190 820 1175 835 1178 860 1190 880 1185 890 1228 922 1235 890 1240 910H1346V930M985 928V1020M1460 307H1535M1430 445L1445 420 1460 412H1535M1495 598L1535 556"/></g><g transform="${Z11}"><path d="M88 125V15L103 0M388 58V180L402 205 440 215 465 230 485 230 500 242M600 180L602 160 635 160M537 825l2 38"/></g><g transform="${Z12}"><path d="M597 443L605 425 630 418 612 395 622 385 652 385 668 370M652 385V425L670 430 650 443"/></g></g>

<g class="st"><g transform="${Z5}" stroke="#6b6b62" stroke-width="1.300">
<g filter="url(#edge)"><path fill="#f28e2b" d="M100 72L630 72 630 60 638 66 640 77 665 85 700 95 735 100 715 112 690 137 715 130 740 145 762 120 768 123 755 142 800 145 825 138 852 152 855 160 820 158 800 165 782 178 770 200 775 215 770 250 778 270 795 268 803 250 800 225 795 205 800 185 820 162 850 170 858 190 846 222 862 210 872 235 865 258 857 272 875 277 905 262 937 245 935 232 985 226 995 210 1018 183 1045 184 1085 181 1105 160 1110 140 1125 117 1150 122 1153 170 1168 188 1150 200 1130 203 1105 225 1090 245 1095 262 1105 275 1112 268 1108 280 1085 282 1045 292 1038 300 1037 320 1020 350 1005 370 990 350 985 335 990 375 1000 398 1005 425 985 440 965 455 945 465 925 485 900 510 892 540 905 575 918 620 912 652 900 652 880 620 865 590 868 560 850 545 820 555 800 543 770 542 735 538 725 545 745 568 700 568 665 555 640 562 600 600 585 622 592 640 560 628 540 590 510 555 485 555 475 572 445 550 435 535 410 510 380 510 378 520 322 518 252 495 205 492 195 480 160 455 150 455 130 420 105 365 90 350 75 310 68 245 78 150 60 90 85 95 98 108 92 120 108 122 104 95Z"/></g>
<path d="M78 150L105 165 160 158 210 157M210 72V157L220 165 205 205 212 215V262M228 72L232 105 262 150 258 165 275 185 290 198 323 192M323 184H458M458 72V290M323 184V290H496V387M72 264H323M153 265V340L258 432M267 265V405L258 410 262 440 252 495M362 290V520M267 387H638M458 158H600M458 237H575L600 245M496 314H625M590 72L600 158 605 225H705M690 137L675 165 680 195 710 220 715 245M622 300H700M600 225L605 260 622 300 625 314 640 330 640 400H728M715 250H770M715 245L725 270 715 280 702 305 710 335 730 360 742 390 730 410 720 440 708 470 700 490 707 527H733V545M775 270V340L765 370 740 395M827 272V345L815 362 800 360 765 372M908 262V305L895 330 870 345 850 352 827 345M730 400H995M722 435L840 432M650 482H705M638 387L643 465 650 470 652 510 657 555M477 400H535V450L550 458 570 462 600 461 643 465M477 387V503H410M765 437L758 540M812 437L825 490 822 528 832 535 885 537 890 528M758 528H822M840 435L870 470 900 510M840 435L885 402M857 440L880 432 910 435 945 462M870 350L880 378M745 398L780 392 850 390 880 378 910 378 925 350 940 330M910 262H1005L1022 280 1012 300 1018 318M908 322H1010M1045 184L1050 270 1045 290M1078 184L1066 250M1048 250H1090M1048 272H1085M1090 180L1095 240M700 145L760 158 777 190M778 271H858M1022 282L1040 292"/>
<path d="M150 455l10 5M165 475h8M180 480l5 5M885 665l12-4M1100 270l10-8 2 10M985 340l15 30M990 350l4 35M995 400l10 20M95 75l8 10-6 12 8 12M985 375l12 8-4 14"/>
<path fill="#fff" stroke="#aaa" stroke-width=".8" d="M690 137L715 112 738 97 758 92 825 132 818 140 800 142 768 140 770 122 750 130 740 143 715 128ZM858 164L880 190 885 225 905 245 880 270 868 268 875 240 865 210 848 215 858 190 848 168ZM860 272L905 250 935 240 935 222 985 214 990 220 940 232 937 248 905 265 880 278ZM790 172L818 165 798 185 800 260 785 270 775 260 770 230 778 200Z"/></g></g>
<g class="st"><g transform="${Z4}" stroke="#000" stroke-width="2">
<path fill="#f28e2b" d="M1310 197L1280 180 1262 172 1235 180 1215 168 1190 168 1150 150 1135 148 1120 160 1100 148 1090 140 1095 130 1075 127 1050 130 1030 118 1024 130 1028 118 1010 98 1000 118 985 130 955 132 945 160 945 140 920 160 900 170 888 195 885 215 870 233 850 238 828 238 826 255 822 267 845 282 865 300 875 328 900 340 912 335 918 352 935 350 943 360 930 366 915 360 912 378 875 377 875 352 845 360 820 380 792 398 800 410 825 415 820 430 830 448 855 452 880 448 895 452 912 440 928 435 930 442 912 448 918 460 932 470 930 485 925 492 900 490 890 512 875 508 860 510 850 540 838 548 832 560 834 575 832 590 850 603 878 605 865 613 850 610 862 628 875 640 892 640 905 612 910 655 908 670 910 685 925 678 940 682 950 670 958 685 965 690 972 680 985 680 1005 672 998 690 995 705 995 735 985 742 970 750 955 768 940 775 945 788 955 782 970 778 1000 755 1030 735 1035 725 1050 712 1060 700 1085 680 1060 672 1062 660 1072 650 1085 635 1100 615 1112 595 1130 592 1140 582 1155 578 1135 592 1155 602 1130 598 1108 618 1112 640 1103 668 1115 662 1130 655 1145 642 1165 635 1170 600 1195 595 1212 610 1235 620 1245 638 1270 632 1310 632Z"/>
<path fill="#f28e2b" d="M1310 627L1345 625 1348 640 1365 655 1395 680 1400 655 1415 645 1422 660 1430 665 1450 690 1460 710 1480 740 1495 765 1520 780 1520 800 1510 822 1490 812 1465 822 1450 800 1430 770 1415 740 1400 705 1370 685 1340 655 1310 640Z"/>
<path fill="#f28e2b" d="M715 485L740 492 755 490 778 505 760 515 740 500 720 500ZM803 630L820 620 838 630 832 642 812 640ZM1046 740L1065 718 1100 697 1092 725 1070 745 1050 765ZM893 808L920 783 935 790 925 800 900 810ZM850 832L870 815 888 820 865 832Z"/>
<path stroke-linecap="round" d="M693 612l4 7 10 5M748 740h3M762 760h1M791 428h1M1008 780h1M1027 787h2M420 882l12 0M436 896l6 3M510 914l10-4M528 910l6 8M535 918l16 14M556 912h2M580 930l5-8M730 896l4-2M740 892l4-2M750 890l10-6M704 902h5M940 785L960 820M930 800l15 5 10 15M892 830l4 4"/>
<path d="M598 918L640 915M648 912L672 909M670 905L698 910" stroke-width="2.600"/>
<path d="M775 882L790 868 800 868 815 850 830 852M835 845L850 838" stroke-width="2.500"/>
<path stroke-width="1.700" d="${scatter([[1180, 605], [1195, 600], [1185, 620], [1180, 630], [1205, 612], [1175, 595]], 22, 10)}${scatter([[1405, 700], [1415, 715], [1412, 735], [1425, 705], [1422, 725], [1440, 720], [1430, 745], [1448, 745], [1435, 765], [1445, 775], [1460, 755], [1455, 785], [1472, 772], [1465, 800], [1460, 812], [1482, 785], [1490, 800], [1475, 812], [1500, 805], [1395, 690]], 24, 15)}${scatter([[905, 345], [860, 608], [1085, 715], [1060, 745], [915, 795], [945, 805]], 14, 5)}${scatter([[800, 868], [820, 855], [620, 916], [680, 908], [945, 155], [1028, 122], [1125, 155], [1250, 635], [1120, 660]], 11, 3)}"/>
</g></g>
<g stroke="#666" fill="#f28e2b"><path d="M696 740l3-1M702 740.500l-2 .5M706 743l3 2M714 745l8 2v5l-8 0zM722 752l6 5-4 3-3-2z"/></g>
<g fill="#b07aa1">${labels.filter(l => !noDot.includes(l[0])).map(([, x, y]) => `<circle cx="${900 + (x + 3) / 3}" cy="${500 + y / 3}" r="5.200"/>`).join('')}${plain.map(([x, y]) => `<circle cx="${900 + x / 3}" cy="${500 + y / 3}" r="5.400"/>`).join('')}<circle cx="759" cy="348" r="5.200"/><circle cx="718.500" cy="748" r="5.200"/></g>
<g font-family="Open Sans,Noto Sans,sans-serif" font-size="13" fill="#222" text-anchor="middle" letter-spacing="-.3">${labels.map(([s, x, y]) => `<text x="${900 + x / 3}" y="${504.7 + y / 3}">${s}</text>`).join('')}<text x="758.500" y="353">AK</text><text x="717" y="753">HI</text><g fill="#999" font-size="12" stroke="#f0f0f0" stroke-width="2" paint-order="stroke"><text x="1007" y="413" textLength="38">Canada</text><text x="1068" y="734.500" textLength="36">Mexico</text></g></g>
</svg>
<style>.c{position:absolute;left:9px;width:28px;background:#f7f7f7;border:1px solid #b5b5b5;display:flex;flex-direction:column;align-items:center}.at{position:absolute;left:2px;bottom:2px;padding:0 3px;background:#ffffffb0;color:#555;height:15px}</style>
<div class="c" style="top:9px;height:28px;justify-content:center">${icon('magB')}</div><div class="c" style="top:46px;height:28px;justify-content:center">${icon('layers')}</div>
<div class="c" style="top:83px;height:110px;padding-top:8px">${icon('add')}${icon('sub', 0, 'margin-top:15px')}${icon('pin', 0, 'margin-top:11px;transform:scale(.9)')}<span style="width:20px;height:1px;background:#ccc;margin:9px 0 10px"></span>${icon('play')}</div>
<div class="at">${T(170, '© 2023 Mapbox © OpenStreetMap', 'font-size:11px')}</div>`);

define('work-sheet', ':host{display:flex;flex-direction:column;background:#fff;border:1px solid #b3b3b3;padding:0 5px 5px;width:1058px}.h{height:43px;padding:11px 0 0 6px;color:#444;font-size:19.500px;font-weight:300}geo-map{flex:1}',
  `<div class="h">${T(226, 'Annual Budget Shortfall')}</div><geo-map></geo-map>`);

const counties = [['(All)',24],['Abbeville County...',104],['Acadia Parish, L...',98],['Accomack Count...',101],['Ada County, Idaho',102],['Adair County, Io...',99],['Adair County, Ke...',102],['Adair County, Mi...',103],['Adair County, Ok...',104],['Adams County, C...',104],['Adams County, I...',100],['Adams County, Il...',104],['Adams County, I...',100],['Adams County, I...',100],['Adams County, ...',96],['Adams County, ...',96],['Adams County, ...',96],['Adams County, ...',96],['Adams County, P...',104],['Adams County, ...',96],['Adams County, ...',96],['Addison County, ...',104],['Aiken County, So...',104],['Aitkin County, M...',103],['Alachua County, ...',103],['Alamance Count...',100],['Alameda County...',101],['Alamosa County,...',104],['Albany County, ...',96],['Albany County, ...',96],['Albemarle Count...',103],['Alcona County, ...',96]];
define('filter-card', `:host{display:flex;flex-direction:column;width:154px;background:#fafafa;border:1px solid #d0d0d0;color:#444}.h{height:29px;padding:6px 0 0 6px}.b{display:flex;background:#fff;flex:1;min-height:0}
.l{flex:1;padding:3px 0 0 6px;overflow:hidden}.r{height:19px;display:flex;align-items:center;gap:6px}.s{width:16px;background:#efefef;margin-top:3px}.s i{display:block;width:2px;height:18px;background:#888;margin:17px 0 0 7px}`,
  () => `<div class="h">${T(75, 'County, State')}</div><div class="b"><div class="l">${counties.map(([s, w]) => `<div class="r">${icon('check')}${T(w, s)}</div>`).join('')}</div><div class="s"><i></i></div></div>`);

const tab = (w, pl, tw, s, ic, cls = '') => `<div class="t ${cls}" style="width:${w}px;padding-left:${pl}px">${ic ? icon(ic, 0, 'margin-right:5px') : ''}${T(tw, s)}</div>`;
define('sheet-tabs', ':host{display:flex;height:30px;border-top:1px solid #c4c4c4;background:#e6e6e6;color:#666}.t{border-right:1px solid #c4c4c4;display:flex;align-items:center;flex-shrink:0}.on{background:#fafafa;font-weight:600;color:#444;padding-bottom:2px}.n{width:32px;justify-content:center;border-right:1px solid #c4c4c4;display:flex;align-items:center}',
  tab(131, 10, 68, 'Data Source', 'cyl') + tab(201, 6, 187, 'Budget Shortfall / States 2019...', '', 'on') + tab(195, 5, 176, 'Food Insesure Children 2019-22') + tab(147, 8, 125, 'Black - Food Insecurity') + tab(165, 8, 142, 'Hispanic - Food Insecurity') + tab(173, 5, 153, 'White non Hispanic Persons') + tab(121, 6, 85, 'Food Insecurity', 'grid') + tab(141, 4, 124, 'Food InSecure Seniors') + tab(169, 5, 149, 'Food Insecure Older Adults') + tab(61, 7, 36, 'Food In', 'grid') + ['nsheet', 'ngrid', 'nstory'].map(n => `<div class="n">${icon(n)}</div>`).join(''));

define('status-bar', ':host{display:flex;height:22px;border-top:1px solid #c8c8c8;border-bottom:1px solid #b8b8b8;background:#ebebeb;align-items:center;color:#222;padding-left:3px;font-size:11.500px}.s{flex:1}.c{height:100%;border-left:1px solid #ccc;display:flex;align-items:center}',
  `${T(60, '6288 marks')}${T(88, '1 row by 1 column', 'margin-left:18px')}${T(318, 'SUM(Weighted Annual Food Budget Shortfall): 64,476,612,000', 'margin-left:18px')}<span class="s"></span>
<div class="c" style="width:127px;padding-left:5px">${icon('person')}${T(71, 'Vibha Chawda', 'margin-left:11px')}${icon('caretK', 13)}</div><div class="c" style="width:27px"></div><div class="c" style="width:27px"></div><div class="c" style="width:47px"></div>
<div class="c" style="width:71px;padding-left:7px">${icon('first')}${icon('prev', 10)}${icon('next', 12)}${icon('last', 10)}</div><div class="c" style="width:68px;padding-left:8px">${icon('v1')}${icon('v2', 10)}${icon('v3', 10)}</div>`);

define('tab-app', `:host{display:flex;flex-direction:column;width:1600px;height:857px}
main{display:flex;height:717px}.r{display:flex;flex-direction:column;gap:6px;margin-left:6px;width:1218px}.v{display:flex;gap:6px;height:643px}
.d{flex:1;background:linear-gradient(90deg,#eee 0,#ededf0 13%,#dcdce6 15%,#e8dedd 25%,#e9d3cd 45%,#dfe3ef 55%,#f4e4d8 75%,#f4dfd2 86%,#dfe5f2 95%,#eee)}`,
  `<title-bar></title-bar><menu-bar></menu-bar><tool-bar></tool-bar>
<main><data-pane></data-pane><shelf-column style="margin-left:6px"></shelf-column><div class="r"><axis-shelf icon="cols" lw="49" label="Columns"><shelf-pill green>${T(126, 'Longitude (generated)')}</shelf-pill></axis-shelf><axis-shelf icon="rows" lw="29" label="Rows"><shelf-pill green>${T(116, 'Latitude (generated)')}</shelf-pill></axis-shelf><div class="v"><work-sheet></work-sheet><filter-card></filter-card></div></div></main>
<sheet-tabs></sheet-tabs><status-bar></status-bar><div class="d"></div>`);
</script>
</body>
</html>
